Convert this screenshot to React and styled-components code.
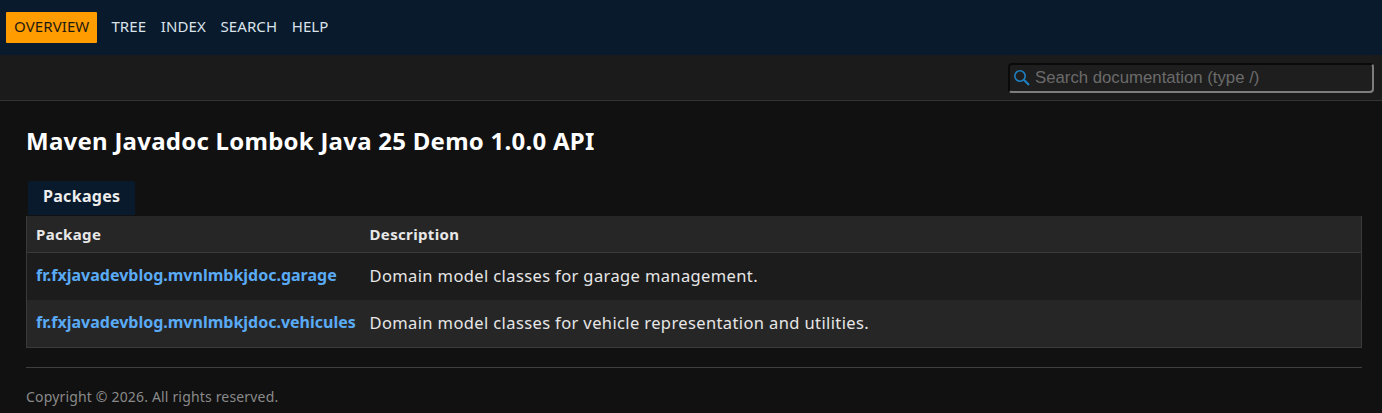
import styled, { createGlobalStyle } from 'styled-components'

const GlobalStyle = createGlobalStyle`
  html, body {
    margin: 0;
    padding: 0;
    background: #111111;
  }
  body {
    font-family: "Noto Sans", "Open Sans", sans-serif;
    color: #e6e6e6;
    overflow: hidden;
  }
`

const Page = styled.div`
  width: 1382px;
  height: 413px;
  overflow: hidden;
`

const TopNav = styled.nav`
  box-sizing: border-box;
  height: 55px;
  background: #081a2c;
  display: flex;
  align-items: flex-start;
  padding: 12px 0 0 6px;
`

const NavItem = styled.a`
  box-sizing: border-box;
  height: 31px;
  padding: 0 ${(p) => (p.$active ? '8px' : '7.3px')} 4px;
  display: flex;
  align-items: center;
  font-size: 15px;
  letter-spacing: 0.1px;
  border-radius: 1px;
  color: ${(p) => (p.$active ? '#1d1a12' : '#dbe3ea')};
  background: ${(p) => (p.$active ? '#ff9c00' : 'transparent')};
  margin-right: ${(p) => (p.$active ? '6.7px' : '0')};
`

const SubNav = styled.div`
  box-sizing: border-box;
  height: 46px;
  background: #1b1b1b;
  border-bottom: 1px solid #343434;
  display: flex;
  justify-content: flex-end;
  padding: 8px 8px 0 0;
`

const SearchBox = styled.div`
  box-sizing: border-box;
  width: 366px;
  height: 30px;
  background: #1e1e1e;
  border-style: solid;
  border-width: 2px;
  border-color: #0a0a0a #7d7d7d #7d7d7d #0a0a0a;
  border-radius: 4px;
  display: flex;
  align-items: center;
  gap: 4px;
  padding-left: 3px;
  font-family: "Liberation Sans", Arial, sans-serif;
  font-size: 16.75px;
  color: #6b6b6b;
`

const Main = styled.main`
  padding: 0 20px 0 26px;
`

const Title = styled.h1`
  margin: 0;
  padding-top: 24px;
  height: 32px;
  font-size: 24px;
  line-height: 32px;
  font-weight: 700;
  color: #ffffff;
  letter-spacing: 0.25px;
`

const Tab = styled.div`
  box-sizing: border-box;
  width: 107px;
  height: 34px;
  margin: 24px 0 0 2px;
  background: #081a2c;
  border-radius: 2px 2px 0 0;
  padding-left: 15px;
  font-size: 16px;
  line-height: 30px;
  font-weight: 700;
  color: #eeeeee;
  letter-spacing: 0.3px;
`

const Table = styled.div`
  box-sizing: border-box;
  margin-top: 1px;
  border-left: 1px solid #3a3a3a;
  border-right: 1px solid #3a3a3a;
  border-bottom: 1px solid #3a3a3a;
`

const Row = styled.div`
  display: grid;
  grid-template-columns: 333.5px 1fr;
  align-items: center;
  box-sizing: border-box;
  height: ${(p) => p.$height}px;
  padding: 0 0 ${(p) => (p.$head ? '0' : '3px')} 9px;
  background: ${(p) => (p.$alt ? '#262626' : '#1c1c1c')};
  border-bottom: ${(p) => (p.$head ? '1px solid #3a3a3a' : 'none')};
`

const Heading = styled.div`
  font-size: 15px;
  font-weight: 700;
  color: #e8e8e8;
  letter-spacing: 0.35px;
`

const PackageLink = styled.a`
  font-size: 16px;
  font-weight: 700;
  color: #5aabf5;
  white-space: nowrap;
`

const Description = styled.div`
  font-size: 16.5px;
  color: #e6e6e6;
  letter-spacing: 0.38px;
`

const Footer = styled.footer`
  margin-top: 19px;
  border-top: 1px solid #3f3f3f;
  padding-top: 20px;
  font-size: 14px;
  line-height: 18px;
  color: #8a8a8a;
  letter-spacing: 0.17px;
`

const SearchIcon = () => (
  <svg width="18" height="18" viewBox="0 0 18 18" fill="none" stroke="#1f7fc0" strokeWidth="1.6">
    <circle cx="7" cy="7" r="5.2" />
    <path d="M10.8 10.8 16 16" strokeWidth="2.2" />
  </svg>
)

export default function App() {
  return (
    <Page>
      <GlobalStyle />
      <TopNav>
        <NavItem $active>OVERVIEW</NavItem>
        <NavItem>TREE</NavItem>
        <NavItem>INDEX</NavItem>
        <NavItem>SEARCH</NavItem>
        <NavItem>HELP</NavItem>
      </TopNav>
      <SubNav>
        <SearchBox>
          <SearchIcon />
          Search documentation (type /)
        </SearchBox>
      </SubNav>
      <Main>
        <Title>Maven Javadoc Lombok Java 25 Demo 1.0.0 API</Title>
        <Tab>Packages</Tab>
        <Table>
          <Row $head $alt $height={37}>
            <Heading>Package</Heading>
            <Heading>Description</Heading>
          </Row>
          <Row $height={47}>
            <PackageLink>fr.fxjavadevblog.mvnlmbkjdoc.garage</PackageLink>
            <Description>Domain model classes for garage management.</Description>
          </Row>
          <Row $alt $height={47}>
            <PackageLink>fr.fxjavadevblog.mvnlmbkjdoc.vehicules</PackageLink>
            <Description>Domain model classes for vehicle representation and utilities.</Description>
          </Row>
        </Table>
        <Footer>Copyright © 2026. All rights reserved.</Footer>
      </Main>
    </Page>
  )
}
